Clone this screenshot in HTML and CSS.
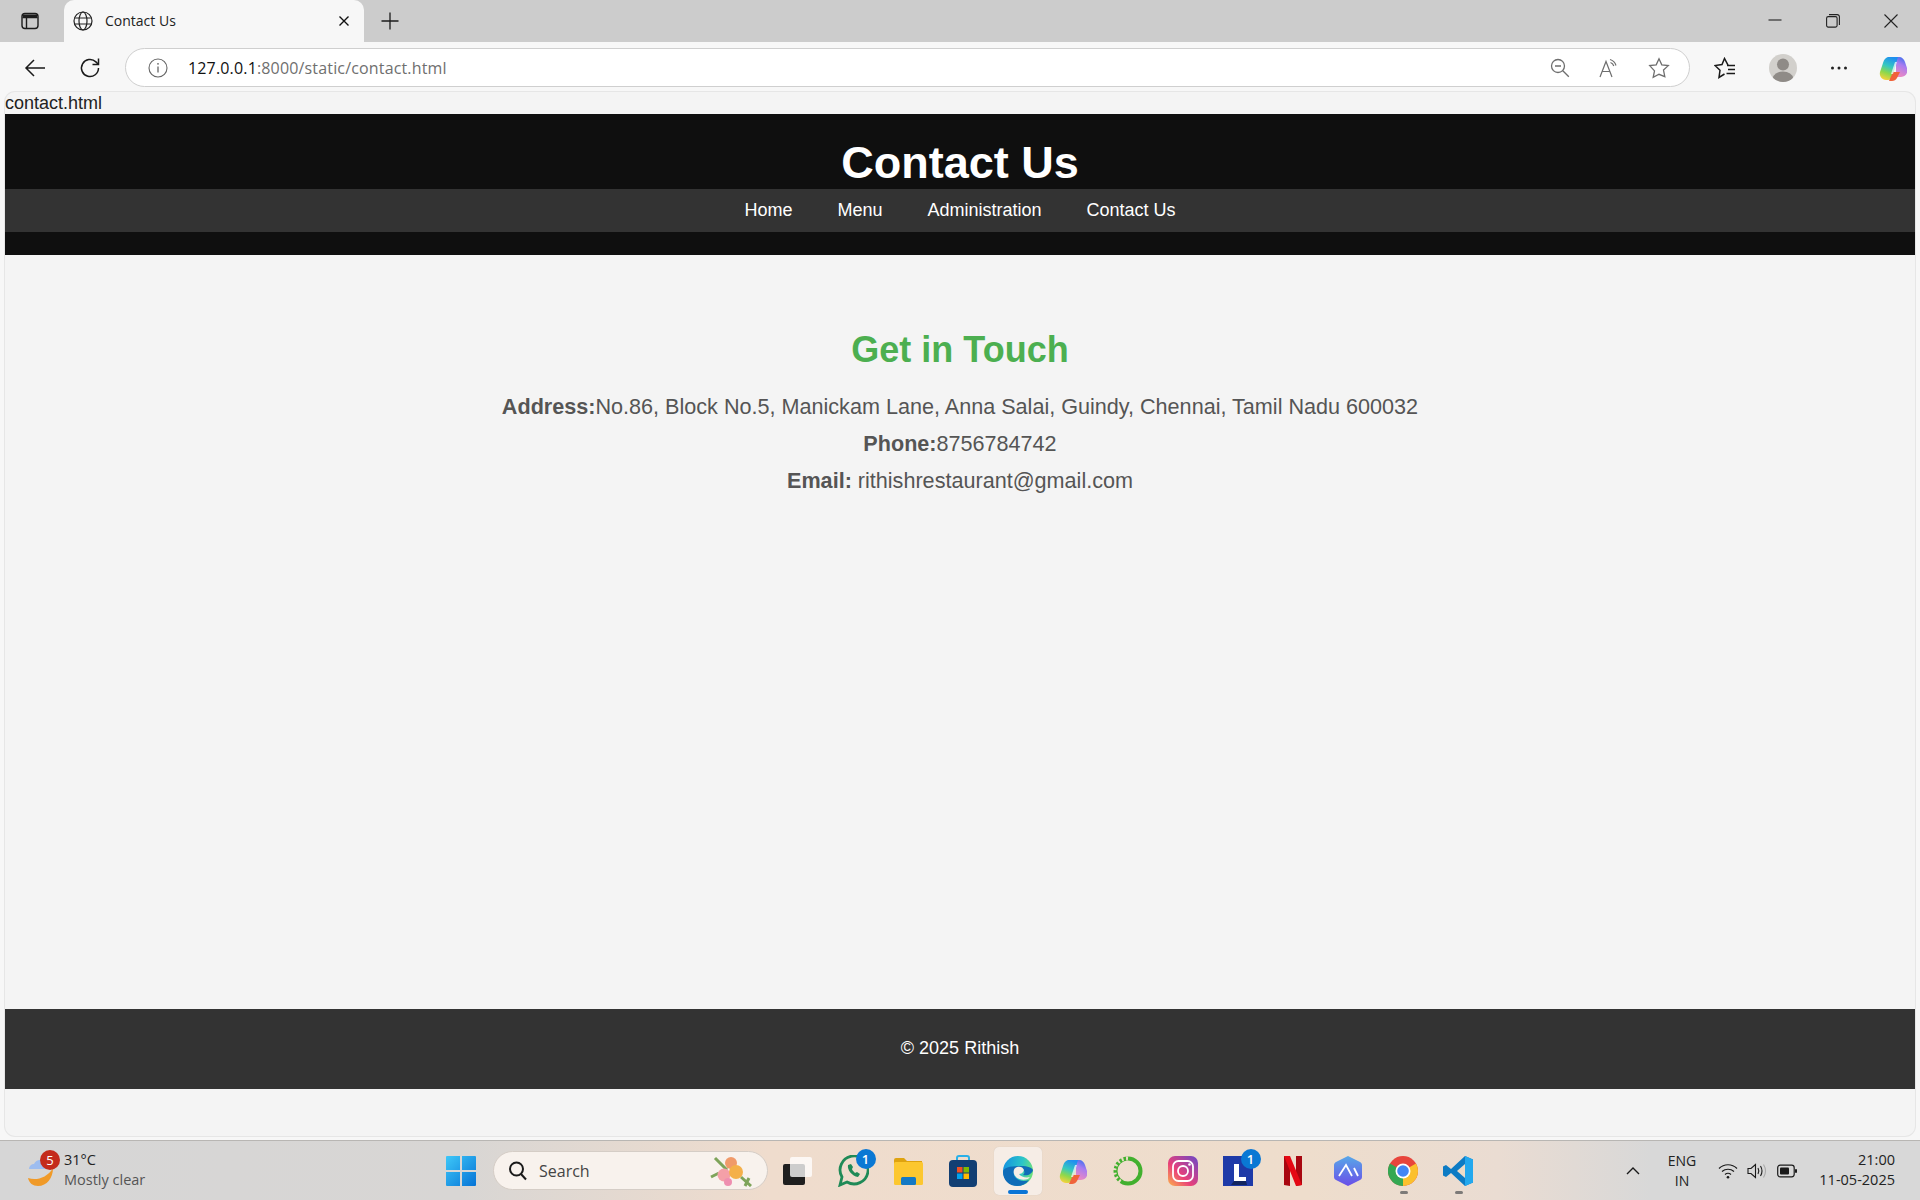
FILE: index.html
```html
<!DOCTYPE html>
<html lang="en">
<head>
    <meta charset="UTF-8">
    <meta name="viewport" content="width=device-width, initial-scale=1.0">
    <title>Contact Us</title>
    <link rel="stylesheet" href="styles.css">
</head>
<body>

    <div class="tabstrip">
        <div class="tab-side">
            <svg width="18" height="18" viewBox="0 0 18 18" fill="none" stroke="#1c1c1c" stroke-width="1.4"><rect x="1" y="1.5" width="16" height="15" rx="3"/><path d="M1.5 5.5h15M5.5 5.5v10.5"/><path d="M2 2.5h14v3H2z" fill="#1c1c1c" stroke="none"/></svg>
        </div>
        <div class="tab">
            <svg width="20" height="20" viewBox="0 0 20 20" fill="none" stroke="#222" stroke-width="1.2"><circle cx="10" cy="10" r="9"/><ellipse cx="10" cy="10" rx="4" ry="9"/><path d="M1.6 7h16.8M1.6 13h16.8"/></svg>
            <span class="tab-title">Contact Us</span>
            <svg class="tab-close" width="12" height="12" viewBox="0 0 12 12" stroke="#111" stroke-width="1.4"><path d="M1.5 1.5l9 9M10.500 1.500l-9 9"/></svg>
        </div>
        <div class="new-tab">
            <svg width="18" height="18" viewBox="0 0 18 18" stroke="#1c1c1c" stroke-width="1.3"><path d="M9 .5v17M.5 9h17"/></svg>
        </div>
        <div class="window-btns">
            <div class="window-btn"><svg width="14" height="14" viewBox="0 0 14 14" stroke="#222" stroke-width="1.1"><path d="M.5 6h13"/></svg></div>
            <div class="window-btn"><svg width="14" height="14" viewBox="0 0 14 14" fill="none" stroke="#222" stroke-width="1.1"><rect x=".6" y="2.600" width="10.500" height="10.500" rx="1.600"/><path d="M3 .6h8.200a2.200 2.200 0 0 1 2.200 2.200V11"/></svg></div>
            <div class="window-btn"><svg width="14" height="14" viewBox="0 0 14 14" stroke="#222" stroke-width="1.1"><path d="M.5.5l13 13M13.500.5l-13 13"/></svg></div>
        </div>
    </div>

    <div class="toolbar">
        <div class="nav-btn">
            <svg width="22" height="20" viewBox="0 0 22 20" fill="none" stroke="#1a1a1a" stroke-width="1.500"><path d="M21 10H2M10 2l-8 8 8 8"/></svg>
        </div>
        <div class="nav-btn nav-btn-reload">
            <svg width="22" height="22" viewBox="0 0 22 22" fill="none" stroke="#1a1a1a" stroke-width="1.500"><path d="M19.500 11a8.500 8.500 0 1 1-2.600-6.100L19.500 7.500"/><path d="M19.500 1.500v6h-6"/></svg>
        </div>
        <div class="address-bar">
            <svg class="info-icon" width="20" height="20" viewBox="0 0 20 20" fill="none" stroke="#666" stroke-width="1.100"><circle cx="10" cy="10" r="9"/><path d="M10 8.500v6" stroke-width="1.300"/><circle cx="10" cy="5.800" r=".9" fill="#666" stroke="none"/></svg>
            <span class="url"><span class="url-host">127.0.0.1</span>:8000/static/contact.html</span>
            <div class="address-icons">
                <svg width="20" height="20" viewBox="0 0 20 20" fill="none" stroke="#6e6e6e" stroke-width="1.300"><circle cx="8" cy="8" r="6.500"/><path d="M5 8h6M12.800 12.800l6 6"/></svg>
                <svg width="20" height="20" viewBox="0 0 20 20" fill="none" stroke="#6e6e6e" stroke-width="1.200"><path d="M1 19L7 3.500 13 19M3.200 13.500h7.600"/><path d="M11 1.500c3 .8 5 2.800 6 6M11.500 4.500c1.600.6 2.800 1.800 3.300 3.500"/></svg>
                <svg width="22" height="22" viewBox="0 0 22 22" fill="none" stroke="#6e6e6e" stroke-width="1.300"><path d="M11 1.800l2.800 6 6.500.8-4.800 4.500 1.300 6.500L11 17.300l-5.800 3.100 1.300-6.500L1.700 8.600l6.500-.8z"/></svg>
            </div>
        </div>
        <div class="toolbar-right">
            <div class="tool-btn">
                <svg width="22" height="22" viewBox="0 0 22 22" fill="none" stroke="#1a1a1a" stroke-width="1.500"><path d="M14 8.200L10.500 1.500 8 7.500l-7 1 5 4.800L5 20.500l5.500-3.500"/><path d="M13 8.500h8M14 12.500h7M12.500 16.500h8.500"/></svg>
            </div>
            <div class="tool-btn tool-btn-avatar">
                <span class="avatar">
                    <svg width="28" height="28" viewBox="0 0 28 28" fill="#8f8b87"><circle cx="14" cy="10.500" r="6"/><ellipse cx="14" cy="24" rx="10" ry="6.500"/></svg>
                </span>
            </div>
            <div class="tool-btn tool-btn-dots">
                <svg width="18" height="4" viewBox="0 0 18 4" fill="#222"><circle cx="2.500" cy="2" r="1.500"/><circle cx="9" cy="2" r="1.500"/><circle cx="15.500" cy="2" r="1.500"/></svg>
            </div>
            <div class="tool-btn">
                <svg width="28" height="28" viewBox="0 0 28 28">
                    <defs>
                        <linearGradient id="cop1" x1="0.600" y1="0" x2="0.300" y2="1"><stop offset="0" stop-color="#1f8ff0"/><stop offset=".4" stop-color="#35c8c0"/><stop offset=".7" stop-color="#8fd84a"/><stop offset="1" stop-color="#f6d23c"/></linearGradient>
                        <linearGradient id="cop2" x1="0.600" y1="0" x2="0.300" y2="1"><stop offset="0" stop-color="#3f6fee"/><stop offset=".4" stop-color="#a97cf0"/><stop offset="1" stop-color="#f08ac0"/></linearGradient>
                    </defs>
                    <path d="M17 3h3c3 0 5 2 6 5l2 6c1.500 4-1 9-6 9h-5z" fill="url(#cop2)"/>
                    <path d="M10 3h9l-6 20c-.6 2-2 3-4 3H7C3 26 0 22 1 18l3-9c1-3.500 3-6 6-6z" fill="url(#cop1)"/>
                    <path d="M10 27l4-9h7l-3 6c-1 2-3 3-5 3z" fill="#f0633a"/>
                    <path d="M16 8l-4 12h2l4-12z" fill="#fff" fill-opacity=".7"/>
                </svg>
            </div>
        </div>
    </div>

    <div class="page">
        <div class="file-name">contact.html</div>
        <header class="site-header">
            <h1>Contact Us</h1>
            <nav class="site-nav">
                <a href="#">Home</a>
                <a href="#">Menu</a>
                <a href="#">Administration</a>
                <a href="#">Contact Us</a>
            </nav>
        </header>
        <main class="contact">
            <h2>Get in Touch</h2>
            <p><strong>Address:</strong>No.86, Block No.5, Manickam Lane, Anna Salai, Guindy, Chennai, Tamil Nadu 600032</p>
            <p><strong>Phone:</strong>8756784742</p>
            <p><strong>Email:</strong> rithishrestaurant@gmail.com</p>
        </main>
        <footer class="site-footer">© 2025 Rithish</footer>
    </div>

    <div class="taskbar">
        <div class="tb-left">
            <div class="weather-icon">
                <svg width="30" height="34" viewBox="0 0 30 34">
                    <path d="M3 15a5 5 0 0 1 5-5 7 7 0 0 1 13 1c3 0 4 2 4 4z" fill="#9dbdf0"/>
                    <path d="M27 14c0 10-6 18-15 18-5 0-9-3-10-8 8 3 19 0 25-10z" fill="#f09a28"/>
                </svg>
                <span class="badge-red">5</span>
            </div>
            <div class="weather-text">
                <div>31°C</div>
                <div class="weather-sub">Mostly clear</div>
            </div>
        </div>
        <div class="tb-center">
            <svg class="win-logo" width="30" height="30" viewBox="0 0 30 30">
                <defs><linearGradient id="win" x1="0" y1="0" x2="1" y2="1"><stop offset="0" stop-color="#3ec8f8"/><stop offset="1" stop-color="#0573d6"/></linearGradient></defs>
                <path d="M0 1a1 1 0 0 1 1-1h13v14H0zM16 0h13a1 1 0 0 1 1 1v13H16zM0 16h14v14H1a1 1 0 0 1-1-1zM16 16h14v13a1 1 0 0 1-1 1H16z" fill="url(#win)"/>
            </svg>
            <div class="search-pill">
                <svg width="20" height="20" viewBox="0 0 20 20" fill="none" stroke="#1a1a1a" stroke-width="2"><circle cx="8.500" cy="8" r="6.500"/><path d="M13 13l5 5.500"/></svg>
                <span class="search-text">Search</span>
                <svg class="search-flower" width="44" height="32" viewBox="0 0 44 32">
                    <path d="M6 3l12 12M32 22l10 9M36 31l4-8M2 22l8-4" stroke="#7ea45a" stroke-width="3" fill="none"/>
                    <circle cx="22" cy="8" r="6" fill="#f09a6a"/>
                    <circle cx="15" cy="20" r="6.500" fill="#f4a0a8"/>
                    <circle cx="27" cy="17" r="7" fill="#f4b04a"/>
                    <circle cx="19" cy="27" r="4" fill="#ee8fb0"/>
                </svg>
            </div>
            <div class="tb-app">
                <svg width="32" height="30" viewBox="0 0 32 30"><rect x="1" y="8" width="22" height="21" rx="2" fill="#1f1f1f"/><rect x="8" y="1" width="22" height="20" rx="2" fill="#fff" fill-opacity=".78"/></svg>
            </div>
            <div class="tb-app">
                <svg width="32" height="32" viewBox="0 0 32 32" fill="none"><path d="M3 30l2-8A14 14 0 1 1 10 27z" stroke="#1f8a57" stroke-width="2.800"/><path d="M11 10c-1 5 4 11 10 12l2-3-3-2-2 1c-1-1-3-3-3-4l1-2-2-3z" fill="#1f8a57"/></svg>
                <span class="badge-blue">1</span>
            </div>
            <div class="tb-app">
                <svg width="30" height="28" viewBox="0 0 30 28"><path d="M1 3a2 2 0 0 1 2-2h8l3 3h15v6H1z" fill="#dfa30f"/><rect x="1" y="5" width="29" height="23" rx="1.500" fill="#fcc72f"/><rect x="8" y="20" width="15" height="8" rx="1.500" fill="#1479c4"/></svg>
            </div>
            <div class="tb-app">
                <svg width="30" height="32" viewBox="0 0 30 32"><path d="M9 6V3a2 2 0 0 1 2-2h8a2 2 0 0 1 2 2v3" fill="none" stroke="#2ab0e8" stroke-width="2"/><rect x="1" y="5" width="28" height="27" rx="4" fill="#123f73"/><rect x="9" y="12" width="5.500" height="5.500" fill="#f25022"/><rect x="15.500" y="12" width="5.500" height="5.500" fill="#7fba00"/><rect x="9" y="18.500" width="5.500" height="5.500" fill="#00a4ef"/><rect x="15.500" y="18.500" width="5.500" height="5.500" fill="#ffb900"/></svg>
            </div>
            <div class="tb-app tb-app-active">
                <svg width="32" height="32" viewBox="0 0 32 32">
                    <defs>
                        <linearGradient id="edge1" x1="0" y1="0.300" x2="1" y2="0.500"><stop offset="0" stop-color="#1593e0"/><stop offset=".6" stop-color="#2cc5c8"/><stop offset="1" stop-color="#6fe07a"/></linearGradient>
                    </defs>
                    <circle cx="16" cy="16" r="15" fill="url(#edge1)"/>
                    <path d="M1 17c0 8 6 14 14 14 5 0 9-2 12-6-5 2-10 1-13-2-3-3-3-7 0-9 3-2 7-1 8 2 1 2 0 3-1 4 5 1 9-1 10-5-1-2-5-4-12-4-9 0-18 1-18 6z" fill="#0f6cb8"/>
                    <path d="M17 19c2 0 4-1 5-4-1-3-4-4-7-3-3 1-4 4-3 7 2 5 8 7 14 5l2-2c-4 1-9 0-11-3z" fill="#f6ede6"/>
                </svg>
                <span class="active-bar"></span>
            </div>
            <div class="tb-app">
                <svg width="28" height="28" viewBox="0 0 28 28">
                    <path d="M17 3h3c3 0 5 2 6 5l2 6c1.500 4-1 9-6 9h-5z" fill="url(#cop2)"/>
                    <path d="M10 3h9l-6 20c-.6 2-2 3-4 3H7C3 26 0 22 1 18l3-9c1-3.500 3-6 6-6z" fill="url(#cop1)"/>
                    <path d="M10 27l4-9h7l-3 6c-1 2-3 3-5 3z" fill="#f0633a"/>
                    <path d="M16 8l-4 12h2l4-12z" fill="#fff" fill-opacity=".7"/>
                </svg>
            </div>
            <div class="tb-app">
                <svg width="30" height="30" viewBox="0 0 30 30" fill="none"><circle cx="15" cy="15" r="12.500" stroke="#42b02e" stroke-width="4"/><path d="M15 2.500A12.500 12.500 0 0 0 8 26" stroke="#eddcc8" stroke-width="4" stroke-dasharray="2 2.500"/></svg>
            </div>
            <div class="tb-app">
                <svg width="30" height="30" viewBox="0 0 30 30">
                    <defs><linearGradient id="insta" x1="0" y1="1" x2="1" y2="0"><stop offset="0" stop-color="#fdb24a"/><stop offset=".4" stop-color="#e8407a"/><stop offset="1" stop-color="#6a48c8"/></linearGradient></defs>
                    <rect width="30" height="30" rx="7" fill="url(#insta)"/>
                    <rect x="5" y="5" width="20" height="20" rx="5.500" fill="none" stroke="#fff" stroke-width="1.800"/>
                    <circle cx="15" cy="15" r="5" fill="none" stroke="#fff" stroke-width="1.800"/>
                    <circle cx="21.500" cy="8.500" r="1.300" fill="#fff"/>
                </svg>
            </div>
            <div class="tb-app">
                <svg width="30" height="30" viewBox="0 0 30 30"><rect width="30" height="30" fill="#1e3aa8"/><path d="M11 8h5v13h7v4H11z" fill="#fff"/><path d="M11 25l-3 4h16l-1-4z" fill="#12255f"/></svg>
                <span class="badge-blue">1</span>
            </div>
            <div class="tb-app">
                <svg width="18" height="30" viewBox="0 0 18 30"><path d="M0 0h6v30l-6-1z" fill="#a80710"/><path d="M12 0h6v29l-6 1z" fill="#a80710"/><path d="M0 0h6l12 29-6 1z" fill="#e50914"/></svg>
            </div>
            <div class="tb-app">
                <svg width="28" height="30" viewBox="0 0 28 30">
                    <defs><linearGradient id="hexa" x1="0" y1="0" x2="0" y2="1"><stop offset="0" stop-color="#58a8e8"/><stop offset="1" stop-color="#6a4ee8"/></linearGradient></defs>
                    <path d="M14 0l12 6c1 .5 2 1.500 2 3v12c0 1.500-1 2.500-2 3l-12 6-12-6c-1-.5-2-1.500-2-3V9c0-1.500 1-2.500 2-3z" fill="url(#hexa)"/>
                    <path d="M5 20l7-11 6 11M20 12l4 8" fill="none" stroke="#fff" stroke-width="1.800"/>
                </svg>
            </div>
            <div class="tb-app">
                <svg width="30" height="30" viewBox="0 0 30 30">
                    <circle cx="15" cy="15" r="15" fill="#e8453c"/>
                    <path d="M15 15L2 7.500A15 15 0 0 0 15 30z" fill="#34a853"/>
                    <path d="M15 15h15a15 15 0 0 1-15 15z" fill="#fbc02d"/>
                    <path d="M15 15l13-7.500A15 15 0 0 1 30 15z" fill="#fbc02d"/>
                    <circle cx="15" cy="15" r="7.500" fill="#fff"/>
                    <circle cx="15" cy="15" r="5.800" fill="#4285f4"/>
                </svg>
                <span class="run-dot"></span>
            </div>
            <div class="tb-app">
                <svg width="30" height="30" viewBox="0 0 30 30">
                    <path d="M22 0l8 3.500v23L22 30 8 17l-5 4-3-1.500v-9L3 9l5 4z" fill="#0d7bc4"/>
                    <path d="M22 0l8 3.500v23L22 30z" fill="#23a8ee"/>
                    <path d="M22 8l-8 7 8 7z" fill="#eddcc8"/>
                </svg>
                <span class="run-dot"></span>
            </div>
        </div>
        <div class="tb-right">
            <svg class="tray-chevron" width="14" height="8" viewBox="0 0 14 8" fill="none" stroke="#1a1a1a" stroke-width="1.400"><path d="M1 7l6-6 6 6"/></svg>
            <div class="tray-lang"><div>ENG</div><div>IN</div></div>
            <svg class="tray-wifi" width="20" height="16" viewBox="0 0 20 16" fill="none" stroke="#1a1a1a" stroke-width="1.200"><path d="M1 5.500c5-5 13-5 18 0M4 8.500c3.500-3 8.500-3 12 0M7 11.500c1.800-1.500 4.200-1.500 6 0"/><circle cx="10" cy="14.200" r="1.300" fill="#1a1a1a" stroke="none"/></svg>
            <svg class="tray-sound" width="20" height="16" viewBox="0 0 20 16" fill="none" stroke="#1a1a1a" stroke-width="1.100"><path d="M1 5.500h3L8.500 1.500v13L4 10.500H1z"/><path d="M11 5c1 1.800 1 4.200 0 6M13.500 3c1.800 3 1.800 7 0 10"/><path d="M16.500 1.500c2.500 4 2.500 9 0 13" stroke="#aaa"/></svg>
            <svg class="tray-battery" width="20" height="14" viewBox="0 0 20 14"><rect x=".7" y="1.200" width="16.500" height="11.600" rx="2.500" fill="none" stroke="#1a1a1a" stroke-width="1.200"/><rect x="3" y="3.500" width="9" height="7" rx="1" fill="#1a1a1a"/><rect x="18" y="5" width="2" height="4" rx="1" fill="#1a1a1a"/></svg>
            <div class="tray-clock"><div>21:00</div><div>11-05-2025</div></div>
        </div>
    </div>

</body>
</html>
```

FILE: styles.css
```css
* {
    box-sizing: border-box;
}

body {
    margin: 0;
    height: 1200px;
    overflow: hidden;
    display: flex;
    flex-direction: column;
    background: #f7f7f7;
    font-family: "Open Sans", "Noto Sans", sans-serif;
}

/* browser chrome */
.tabstrip {
    height: 42px;
    display: flex;
    background: #cccccc;
}

.tab-side {
    width: 64px;
    padding-left: 21px;
    display: flex;
    align-items: center;
}

.tab {
    width: 300px;
    padding: 0 11px 1px 9px;
    display: flex;
    align-items: center;
    background: #f7f7f7;
    border-radius: 10px 10px 0 0;
}

.tab-title {
    margin-left: 12px;
    font-size: 14px;
    color: #222;
}

.tab-close {
    margin-left: auto;
    margin-right: 3px;
}

.new-tab {
    width: 52px;
    display: flex;
    align-items: center;
    justify-content: center;
}

.window-btns {
    margin-left: auto;
    display: flex;
}

.window-btn {
    width: 58px;
    display: flex;
    align-items: center;
    justify-content: center;
}

.toolbar {
    height: 50px;
    padding-top: 1px;
    display: flex;
    align-items: center;
    background: #f7f7f7;
}

.nav-btn {
    width: 46px;
    margin-left: 12px;
    display: flex;
    justify-content: center;
}

.nav-btn-reload {
    margin-left: 9px;
    margin-right: 12px;
}

.address-bar {
    width: 1565px;
    height: 39px;
    flex-shrink: 0;
    padding: 0 19px 0 22px;
    display: flex;
    align-items: center;
    background: #fff;
    border: 1px solid #cfcfcf;
    border-radius: 20px;
}

.url {
    margin-left: 20px;
    font-family: "Open Sans", sans-serif;
    font-size: 16px;
    letter-spacing: 0.16px;
    color: #6f6f6f;
}

.url-host {
    color: #111;
}

.address-icons {
    margin-left: auto;
    display: flex;
    align-items: center;
    gap: 29px;
}

.toolbar-right {
    margin-left: 7px;
    display: flex;
    align-items: center;
}

.tool-btn {
    width: 56px;
    display: flex;
    align-items: center;
    justify-content: center;
}

.tool-btn:last-child {
    width: 55px;
}

.tool-btn-avatar {
    padding-left: 4px;
}

.tool-btn-dots {
    padding-left: 3px;
}

.avatar {
    width: 28px;
    height: 28px;
    overflow: hidden;
    border-radius: 50%;
    background: #d2d0cc;
}

.avatar svg {
    display: block;
}

/* the page inside the browser */
.page {
    flex: 1;
    margin: 0 5px 4px;
    padding-top: 1px;
    display: flex;
    flex-direction: column;
    font-family: "Liberation Sans", Arial, sans-serif;
    background: #f4f4f4;
    border-radius: 10px;
    box-shadow: 0 0 0 1px #e6e6e6;
}

.file-name {
    height: 21px;
    font-size: 18px;
    line-height: 21px;
    color: #222;
}

.site-header {
    height: 141px;
    padding-top: 21px;
    text-align: center;
    background: #0f0f0f;
    color: #fff;
}

.site-header h1 {
    margin: 0;
    height: 54px;
    font-size: 45px;
    line-height: 55px;
}

.site-nav {
    height: 43px;
    display: flex;
    justify-content: center;
    align-items: center;
    gap: 45px;
    background: #333;
}

.site-nav a {
    font-size: 18px;
    color: #fff;
    text-decoration: none;
}

.contact {
    flex: 1;
    padding-top: 75px;
    text-align: center;
    color: #555;
}

.contact h2 {
    margin: 0 0 18px;
    font-size: 36px;
    line-height: 40px;
    color: #4caf50;
}

.contact p {
    margin: 0;
    font-size: 21.6px;
    line-height: 37px;
}

.site-footer {
    height: 80px;
    margin-bottom: 47px;
    padding-bottom: 1px;
    display: flex;
    align-items: center;
    justify-content: center;
    background: #333;
    color: #fff;
    font-size: 18px;
}

/* windows taskbar */
.taskbar {
    height: 60px;
    display: flex;
    align-items: center;
    color: #222;
    border-top: 1px solid #b8b6b3;
    background: linear-gradient(90deg, #d6d6d6 0, #d8d6d4 24%, #efdccd 40%, #eeddcc 68%, #eadcd2 78%, #d8d8d8 86%, #d8d8d8 100%);
}

.tb-left {
    width: 446px;
    padding-left: 26px;
    display: flex;
    align-items: center;
}

.weather-icon {
    position: relative;
    width: 38px;
    height: 34px;
}

.badge-red {
    position: absolute;
    top: -4px;
    left: 14px;
    width: 20px;
    height: 20px;
    text-align: center;
    font-size: 13px;
    line-height: 20px;
    color: #fff;
    background: #c42b1c;
    border-radius: 50%;
}

.weather-text {
    margin-bottom: 2px;
    font-size: 14.5px;
    line-height: 20px;
}

.weather-sub {
    color: #555;
}

.tb-center {
    display: flex;
    align-items: center;
}

.search-pill {
    width: 275px;
    height: 39px;
    margin-left: 17px;
    margin-right: 2.500px;
    padding: 0 14px 0 14px;
    display: flex;
    align-items: center;
    background: #f8f2ed;
    border: 1px solid #d5cdc6;
    border-radius: 20px;
}

.search-text {
    margin-left: 11px;
    font-size: 16px;
    color: #444;
}

.search-flower {
    margin-left: auto;
}

.tb-app {
    position: relative;
    width: 55px;
    height: 48px;
    display: flex;
    align-items: center;
    justify-content: center;
}

.tb-app-active {
    margin: 0 3.500px;
    width: 48px;
    background: #f6ede6;
    border-radius: 5px;
    box-shadow: 0 0 1px #c9c0b8;
}

.active-bar {
    position: absolute;
    left: 14px;
    bottom: 1px;
    width: 20px;
    height: 4px;
    background: #0a74d6;
    border-radius: 2px;
}

.run-dot {
    position: absolute;
    left: 24px;
    bottom: 1px;
    width: 8px;
    height: 3px;
    background: #7d7a78;
    border-radius: 2px;
}

.badge-blue {
    position: absolute;
    top: 2px;
    right: 5px;
    width: 20px;
    height: 20px;
    text-align: center;
    font-size: 13px;
    font-weight: 600;
    line-height: 20px;
    color: #fff;
    background: #0a78d4;
    border-radius: 50%;
}

.tb-right {
    margin-left: auto;
    padding-right: 25px;
    display: flex;
    align-items: center;
}

.tray-lang {
    width: 40px;
    margin-left: 22px;
    text-align: center;
    font-size: 14px;
    line-height: 20px;
}

.tray-wifi {
    margin-left: 16px;
}

.tray-sound {
    margin-left: 9px;
}

.tray-battery {
    margin-left: 10px;
}

.tray-clock {
    width: 85px;
    margin-left: 13px;
    margin-bottom: 2px;
    text-align: right;
    font-size: 14.500px;
    line-height: 20px;
}
```
